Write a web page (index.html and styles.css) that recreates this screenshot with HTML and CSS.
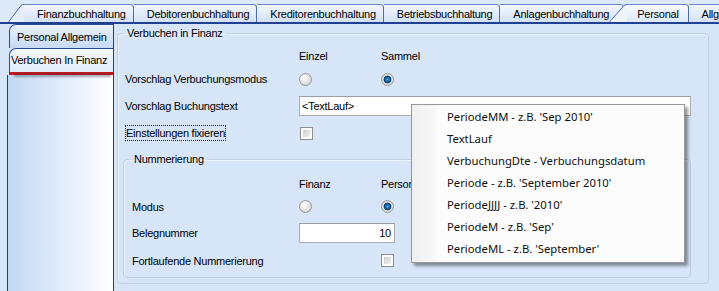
FILE: index.html
```html
<!DOCTYPE html>
<html>
  <head>
    <title>Personal - Verbuchen in Finanz</title>
    <meta charset="utf-8">
    <link rel="stylesheet" href="styles.css">
  </head>
  <body>
    <div class="tabstrip">
      <div class="tab">
        <svg class="slant" width="16" height="18" viewBox="0 0 16 18">
          <path d="M0 18 L13 1.5 Q14 0.5 16 0.5 L16 18 Z" fill="#e6eefa"/>
          <path d="M0.5 18 L13 1.5 Q14 0.5 16 0.5" fill="none" stroke="#4c6cb4"/>
        </svg>
        <span class="tab-label">Finanzbuchhaltung</span>
      </div>
      <div class="tab"><span class="tab-label">Debitorenbuchhaltung</span></div>
      <div class="tab"><span class="tab-label">Kreditorenbuchhaltung</span></div>
      <div class="tab"><span class="tab-label">Betriebsbuchhaltung</span></div>
      <div class="tab tab-before-active"><span class="tab-label">Anlagenbuchhaltung</span></div>
      <div class="tab tab-active">
        <svg class="slant" width="18" height="20" viewBox="0 0 18 20">
          <path d="M0 18 L15 1.5 Q16 0.5 18 0.5 L18 18 Z" fill="#eef4fc"/>
          <path d="M0.5 18 L15 1.5 Q16 0.5 18 0.5" fill="none" stroke="#4c6cb4"/>
          <rect x="0" y="18" width="18" height="2" fill="#c4161c"/>
        </svg>
        <span class="tab-label">Personal</span>
      </div>
      <div class="tab"><span class="tab-label">Allgemein</span></div>
    </div>

    <div class="layout">
      <div class="side">
        <div class="vtab">Personal Allgemein</div>
        <div class="vtab vtab-active">Verbuchen In Finanz</div>
        <div class="side-panel"></div>
      </div>

      <div class="main">
        <fieldset class="group">
          <legend>Verbuchen in Finanz</legend>
          <div class="form-grid">
            <span></span>
            <span>Einzel</span>
            <span>Sammel</span>

            <span class="label">Vorschlag Verbuchungsmodus</span>
            <span class="radio"></span>
            <span class="radio radio-on"></span>

            <span class="label">Vorschlag Buchungstext</span>
            <span class="textbox textbox-wide">&lt;TextLauf&gt;</span>

            <span class="label"><span class="focus">Einstellungen fixieren</span></span>
            <span class="checkbox checkbox-narrow"></span>
            <span></span>
          </div>

          <fieldset class="group group-inner">
            <legend>Nummerierung</legend>
            <div class="form-grid form-grid-inner">
              <span></span>
              <span>Finanz</span>
              <span>Personal</span>

              <span>Modus</span>
              <span class="radio"></span>
              <span class="radio radio-on"></span>

              <span>Belegnummer</span>
              <span class="textbox textbox-number">10</span>

              <span>Fortlaufende Nummerierung</span>
              <span></span>
              <span class="checkbox"></span>
            </div>
          </fieldset>
        </fieldset>
      </div>
    </div>

    <div class="menu">
      <div class="menu-item">PeriodeMM - z.B. 'Sep 2010'</div>
      <div class="menu-item">TextLauf</div>
      <div class="menu-item">VerbuchungDte - Verbuchungsdatum</div>
      <div class="menu-item">Periode - z.B. 'September 2010'</div>
      <div class="menu-item">PeriodeJJJJ - z.B. '2010'</div>
      <div class="menu-item">PeriodeM - z.B. 'Sep'</div>
      <div class="menu-item">PeriodeML - z.B. 'September'</div>
    </div>
  </body>
</html>
```

FILE: styles.css
```css
body {
  position: relative;
  width: 719px;
  height: 291px;
  margin: 0;
  overflow: hidden;
  background: #d6e5f8;
  font: 11px "Liberation Sans", Arial, sans-serif;
  letter-spacing: -0.25px;
  color: #000;
}

/* top tab strip */
.tabstrip {
  display: flex;
  align-items: flex-end;
  height: 22px;
  padding-left: 8px;
  overflow: hidden;
  border-bottom: 2px solid #1e3f92;
  background: #dce9f9;
}
.tab {
  display: flex;
  align-items: flex-end;
  flex-shrink: 0;
  height: 18px;
}
.slant {
  display: block;
  flex-shrink: 0;
}
.tab-label {
  box-sizing: border-box;
  height: 18px;
  padding: 0 7px 0 13px;
  line-height: 18px;
  white-space: nowrap;
  border-top: 1px solid #6a87c4;
  border-right: 1px solid #4c6cb4;
  border-top-right-radius: 4px;
  background: linear-gradient(#f3f7fd, #d2e1f5);
}
.tab-before-active .tab-label {
  padding-right: 14px;
}
.tab-active {
  position: relative;
  z-index: 1;
  height: 20px;
  margin-bottom: -2px;
  margin-left: -15px;
}
.tab-active .tab-label {
  height: 20px;
  padding: 0 9px 0 10px;
  line-height: 18px;
  border-bottom: 2px solid #c4161c;
  background: linear-gradient(#f8fbff, #dde9f9);
}
.tab-active::after {
  content: "";
  position: absolute;
  left: 4px;
  right: -4px;
  top: 100%;
  height: 3px;
  margin-top: 3px;
  background: rgba(40, 50, 70, 0.45);
  filter: blur(1.2px);
}

/* layout below the tabs */
.layout {
  display: flex;
  height: 267px;
}
.side {
  display: flex;
  flex-direction: column;
  width: 106px;
  margin-left: 7px;
  border-right: 1px solid #1e3f92;
}
.vtab {
  box-sizing: border-box;
  height: 24px;
  margin-left: 2px;
  padding-left: 7px;
  line-height: 24px;
  white-space: nowrap;
  overflow: hidden;
  border: 1px solid #2a4a9c;
  border-right: none;
  border-bottom: none;
  border-top-left-radius: 7px;
  background: linear-gradient(#eaf2fc, #c7daf4);
}
.vtab-active {
  position: relative;
  overflow: visible;
  height: 27px;
  margin-left: 2px;
  padding-left: 1px;
  line-height: 23px;
  border-bottom: 3px solid #c4161c;
  background: linear-gradient(#f7faff, #dfeaf9);
}
.vtab-active::after {
  content: "";
  position: absolute;
  left: 4px;
  right: 2px;
  top: 100%;
  height: 3px;
  margin-top: 2px;
  background: rgba(40, 50, 70, 0.4);
  filter: blur(1.2px);
}
.side-panel {
  flex: 1;
  border-left: 1px solid #1e3f92;
  background: linear-gradient(to right, #c2d8f6, #ffffff);
}
.main {
  flex: 1;
  padding: 3px 10px 0 3px;
}

/* group boxes */
.group {
  margin: 0;
  padding: 5px 17px 5px 5px;
  border: 1px solid #bfcfe6;
  border-radius: 4px;
  box-shadow: inset 1px 1px 0 #eaf2fc;
}
.group legend {
  margin-left: 1px;
  padding: 0 3px;
  line-height: 13px;
}
.group-inner {
  margin-top: 7px;
  padding: 7px 0 4px 8px;
}
.group-inner legend {
  margin-left: -1px;
}

.form-grid {
  display: grid;
  grid-template-columns: 176px 82px 1fr;
  grid-template-rows: 22px 24px 29px 26px;
  align-items: center;
}
.form-grid-inner {
  grid-template-columns: 167px 82px 1fr;
  grid-template-rows: 22px 23px 30px 25px;
}
.label {
  padding-left: 2px;
  white-space: nowrap;
}
.focus {
  padding: 1px 0 1px 0;
  border: 1px dotted #222;
}

/* controls */
.radio {
  box-sizing: border-box;
  width: 13px;
  height: 13px;
  border: 1px solid #979797;
  border-radius: 50%;
  background: radial-gradient(circle at 40% 35%, #ffffff 0, #e8e8e8 45%, #c6c6c6 100%);
}
.radio-on {
  background: radial-gradient(circle at 50% 50%, #5fb4ec 0, #1c73b8 1.5px, #0d3d6c 3.5px, #d8d8d8 4.2px, #e9e9e9 100%);
}
.checkbox {
  box-sizing: border-box;
  width: 13px;
  height: 13px;
  padding: 2px;
  border: 1px solid #8e8f8f;
  background: linear-gradient(135deg, #cbcbcb, #f3f3f3) content-box, #fbfbfb;
}
.checkbox-narrow {
  margin-left: 1px;
}
.textbox {
  box-sizing: border-box;
  height: 20px;
  padding: 0 3px 0 2px;
  line-height: 18px;
  background: #fff;
  border: 1px solid #abadb3;
  border-top-color: #9a9ea6;
}
.textbox-wide {
  grid-column: 2 / 4;
}
.textbox-number {
  grid-column: 2 / 4;
  justify-self: start;
  width: 96px;
  text-align: right;
}

/* context menu */
.menu {
  position: absolute;
  left: 411px;
  top: 104px;
  z-index: 2;
  box-sizing: border-box;
  width: 274px;
  padding: 1px 0 2px;
  border: 1px solid #979797;
  background: linear-gradient(to right, #efefef 0, #f8f8f8 24px, #fcfcfc 25px);
  box-shadow: 3px 3px 3px rgba(0, 0, 0, 0.4);
  font: 11.3px "Noto Sans", "Open Sans", sans-serif;
  letter-spacing: 0;
  color: #111;
}
.menu-item {
  height: 22px;
  padding-left: 35px;
  line-height: 22px;
  white-space: nowrap;
}
```
